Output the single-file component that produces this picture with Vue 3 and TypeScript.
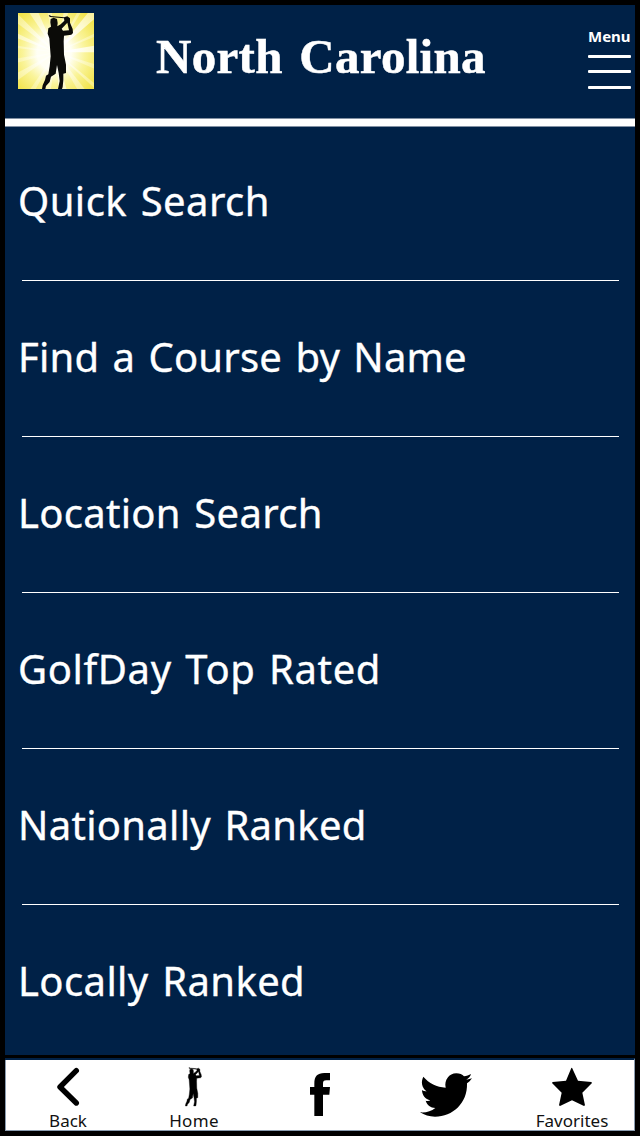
<script setup lang="ts">
interface Entry {
  label: string
  spacing: number
}

const entries: Entry[] = [
  { label: 'Quick Search', spacing: 0.45 },
  { label: 'Find a Course by Name', spacing: 0.2 },
  { label: 'Location Search', spacing: 0.3 },
  { label: 'GolfDay Top Rated', spacing: 0.6 },
  { label: 'Nationally Ranked', spacing: 0.3 },
  { label: 'Locally Ranked', spacing: 0.4 },
]

const golfer =
  'M92 8 L96 6 L98 9 L138 13 L148 10 L156 16 L156 29 L164 48 L165 60 L160 65 L138 68 L137 85 L138 125 L144 155 L144 180 L136 182 L136 202 L134 222 L132 228 L120 228 L125 204 L122 180 L117 156 L113 182 L99 191 L95 207 L84 219 L82 228 L72 228 L74 217 L81 201 L84 188 L91 184 L95 160 L98 130 L94 76 L89 62 L91 46 L99 41 L97 28 L98 18 L107 14 L117 18 L119 30 L118 40 L128 34 L139 23 L138 16 L96 12 Z M148 29 L131 47 L135 53 L153 52 Z'

/* [angle in degrees, half width in degrees, opacity] */
const beams: [number, number, number][] = [
  [-172, 2, 0.5], [-157, 3, 0.8], [-139, 4, 0.7], [-119, 5, 0.8], [-99, 3, 0.6], [-76, 3, 0.7],
  [-60, 2, 0.6], [-46, 5, 1], [-24, 2, 0.5], [-5, 5, 1], [20, 3, 0.5], [41, 2, 0.6], [56, 4, 0.6],
  [80, 6, 0.8], [103, 5, 0.6], [122, 3, 0.5], [148, 4, 0.6], [168, 3, 0.5],
]

const rays = beams.map(([deg, half, opacity]) => {
  const p = (d: number) => {
    const t = (d * Math.PI) / 180
    return `${(114 + Math.cos(t) * 190).toFixed(1)} ${(118 + Math.sin(t) * 190).toFixed(1)}`
  }
  return { d: `M114 118 L${p(deg - half)} L${p(deg + half)} Z`, opacity }
})
</script>

<template>
  <div class="screen">
    <header class="header">
      <svg class="logo" viewBox="0 0 228 228">
        <defs>
          <radialGradient id="glow" gradientUnits="userSpaceOnUse" cx="108" cy="120" r="160">
            <stop offset="0.32" stop-color="#fffff4" />
            <stop offset="0.58" stop-color="#faf49a" />
            <stop offset="0.95" stop-color="#f1e34a" />
          </radialGradient>
          <radialGradient id="ray" gradientUnits="userSpaceOnUse" cx="114" cy="118" r="160">
            <stop offset="0.3" stop-color="#fff" />
            <stop offset="1" stop-color="#fffcd8" stop-opacity="0.6" />
          </radialGradient>
        </defs>
        <rect width="228" height="228" fill="url(#glow)" />
        <path v-for="(r, i) in rays" :key="i" :d="r.d" :opacity="r.opacity" fill="url(#ray)" />
        <path :d="golfer" fill="#0b0b08" fill-rule="evenodd" />
      </svg>
      <h1 class="title">North Carolina</h1>
      <div class="menu">
        <span class="menu-label">Menu</span>
        <i></i><i></i><i></i>
      </div>
    </header>

    <main class="list">
      <div v-for="e in entries" :key="e.label" class="row">
        <span :style="{ letterSpacing: e.spacing + 'px' }">{{ e.label }}</span>
      </div>
    </main>

    <nav class="tabs">
      <div class="tab">
        <svg width="24" height="40" viewBox="0 0 24 40"><path d="M20.3 3.7 L4 20 L20.3 36" fill="none" stroke="#000" stroke-width="5.4" stroke-linecap="round" stroke-linejoin="round" /></svg>
        <span>Back</span>
      </div>
      <div class="tab">
        <svg width="18" height="40" viewBox="70 3 104 231"><path :d="golfer" fill-rule="evenodd" stroke="#000" stroke-width="2" /></svg>
        <span class="home">Home</span>
      </div>
      <div class="tab social">
        <svg width="20" height="43" viewBox="0 0 60 129"><path d="M13 129 V65 H0 V42 H13 V31 C13 10 22 0 43 0 H60 V22 H49 C41 22 39 25 39 33 V42 H60 L58 65 H39 V129 Z" /></svg>
      </div>
      <div class="tab social">
        <svg width="52" height="44" viewBox="0 0 156 132"><path d="M156 16 C151 23 147 27 141 31 C143 91 98 131 45 131 C28 131 13 126 0 118 C17 120 33 115 46 105 C32 104 21 96 17 83 C22 84 27 84 31 82 C16 79 6 66 6 51 C10 54 15 55 20 55 C5 44 2 26 10 11 C27 31 50 42 77 44 C72 22 87 1 109 1 C119 1 127 5 132 10 C140 9 147 6 153 3 C151 10 146 16 139 20 C145 19 151 18 156 16 Z" /></svg>
      </div>
      <div class="tab">
        <svg width="42" height="40" viewBox="0 0 126 120"><path d="M63 2 L81 41 L121 45 L123 48 L94 77 L102 115 L99 117 L63 100 L27 117 L24 115 L32 77 L3 48 L5 45 L45 41 L61 3 Z" /></svg>
        <span>Favorites</span>
      </div>
    </nav>
  </div>
</template>

<style>
body {
  margin: 0;
  background: #000;
}
</style>

<style scoped>
.screen {
  box-sizing: border-box;
  width: 640px;
  height: 1136px;
  padding: 5px 5px 0;
  background: #000;
  color: #fff;
  overflow: hidden;
  font-family: 'Noto Sans', 'Open Sans', sans-serif;
}
.header {
  box-sizing: border-box;
  display: flex;
  align-items: flex-start;
  height: 121px;
  padding: 8px 4px 0 13px;
  background: #002147;
  border-bottom: 7px solid #fff;
  box-shadow: inset 0 -1px #8190a3;
}
.logo {
  width: 76px;
  height: 76px;
}
.title {
  width: 340px;
  margin: 16px 0 0 62px;
  font: bold 49px/56px 'Liberation Serif', serif;
  letter-spacing: 0.3px;
  word-spacing: 4px;
  white-space: nowrap;
  -webkit-text-stroke: 0.5px #fff;
}
.menu {
  display: flex;
  flex-direction: column;
  width: 43px;
  margin: 12px 0 0 auto;
}
.menu-label {
  height: 29.5px;
  font-size: 15px;
  font-weight: 700;
  line-height: 22px;
  white-space: nowrap;
}
.menu i {
  height: 3px;
  margin-bottom: 12.7px;
  border-radius: 1px;
  background: #fff;
}
.list {
  box-sizing: border-box;
  height: 929px;
  padding: 0 16px 0 17px;
  overflow: hidden;
  background: #002147;
  border-top: 1px solid #8190a3;
}
.row {
  box-sizing: border-box;
  height: 156px;
  padding-top: 48px;
  border-bottom: 1px solid #fff;
  font-size: 40px;
  line-height: 56px;
  word-spacing: 2.7px;
  white-space: nowrap;
  -webkit-text-stroke: 0.35px #fff;
}
.row:first-child {
  height: 154px;
  padding-top: 46px;
}
.row span {
  margin-left: -4px;
}
.tabs {
  box-sizing: border-box;
  display: grid;
  grid-template-columns: repeat(5, 126px);
  height: 73px;
  margin-top: 3px;
  border-top: 2px solid #002147;
  border-bottom: 1px solid #8b9caf;
  border-right: 1px solid #8b9caf;
  box-shadow: inset 1px 0 #8b9caf;
  background: #fff;
  color: #111;
}
.tab {
  display: flex;
  flex-direction: column;
  align-items: center;
  padding-top: 7px;
}
.tab span {
  margin-top: 2px;
  font-size: 17px;
  line-height: 23px;
}
.tab .home {
  letter-spacing: 0.3px;
}
.social {
  padding-top: 13px;
}
</style>
